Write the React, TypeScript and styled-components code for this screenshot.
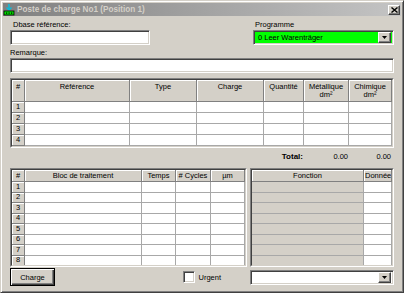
import React from "react";
import styled, { createGlobalStyle, css } from "styled-components";

const GlobalStyle = createGlobalStyle`
  html, body {
    margin: 0;
    padding: 0;
    background: #d4d0c8;
  }
  body {
    font-family: "Liberation Sans", Arial, sans-serif;
    font-size: 7.5px;
    color: #000;
  }
  * {
    box-sizing: border-box;
  }
`;

const sunken = css`
  border: 1px solid;
  border-color: #808080 #fff #fff #808080;
  box-shadow: inset 1px 1px #404040, inset -1px -1px #d4d0c8;
`;

const raised = css`
  border: 1px solid;
  border-color: #fff #404040 #404040 #fff;
  box-shadow: inset -1px -1px #808080;
`;

const Window = styled.div`
  width: 404px;
  height: 293px;
  background: #d4d0c8;
  border: 1px solid;
  border-color: #d4d0c8 #404040 #404040 #d4d0c8;
  box-shadow: inset 1px 1px #fff, inset -1px -1px #808080;
  padding: 2px;
  display: flex;
  flex-direction: column;
  overflow: hidden;
`;

const TitleBar = styled.div`
  height: 13px;
  flex: none;
  display: flex;
  align-items: center;
  background: linear-gradient(to right, #808080, #c4c4c4);
`;

const TitleText = styled.span`
  flex: 1;
  margin-left: 2px;
  color: #d4d0c8;
  font-weight: bold;
  font-size: 8.2px;
  white-space: nowrap;
`;

const CloseButton = styled.div`
  ${raised};
  width: 12px;
  height: 10px;
  margin-right: 1px;
  background: #d4d0c8;
  display: flex;
  align-items: center;
  justify-content: center;
`;

const Body = styled.div`
  flex: 1;
  display: flex;
  flex-direction: column;
  padding: 0 7px;
`;

const TopRow = styled.div`
  display: flex;
  justify-content: space-between;
  margin-top: 3px;
`;

const Field = styled.div<{ $width: number }>`
  width: ${(p) => p.$width}px;
  display: flex;
  flex-direction: column;
`;

const Label = styled.div<{ $indent?: number; $gap?: number }>`
  height: 11px;
  line-height: 11px;
  padding-left: ${(p) => p.$indent ?? 0}px;
  margin-top: ${(p) => p.$gap ?? 0}px;
  white-space: nowrap;
`;

const TextInput = styled.div`
  ${sunken};
  height: 15px;
  background: #fff;
`;

const Combo = styled.div<{ $bg: string }>`
  ${sunken};
  height: 15px;
  background: ${(p) => p.$bg};
  display: flex;
  align-items: center;
  padding: 2px 2px 2px 4px;
`;

const ComboText = styled.span`
  flex: 1;
  white-space: nowrap;
`;

const DropButton = styled.div`
  ${raised};
  width: 13px;
  height: 11px;
  background: #d4d0c8;
  display: flex;
  align-items: center;
  justify-content: center;
`;

const TableFrame = styled.div<{ $height: number }>`
  height: ${(p) => p.$height}px;
  border: 1px solid;
  border-color: #808080 #fff #fff #808080;
  overflow: hidden;
`;

const TableGrid = styled.div<{ $cols: string; $rows: string }>`
  height: 100%;
  border: 1px solid;
  border-color: #404040 #d4d0c8 #d4d0c8 #404040;
  display: grid;
  grid-template-columns: ${(p) => p.$cols};
  grid-template-rows: ${(p) => p.$rows};
  background: #fff;
  overflow: hidden;
`;

const HeadCell = styled.div<{ $top?: boolean; $left?: boolean }>`
  background: #d4d0c8;
  border-right: 1px solid #808080;
  border-bottom: 1px solid #808080;
  box-shadow: inset 1px 1px #fff;
  display: flex;
  flex-direction: column;
  align-items: ${(p) => (p.$left ? "flex-start" : "center")};
  justify-content: ${(p) => (p.$top ? "flex-start" : "center")};
  padding: ${(p) => (p.$top ? "3px 0 0" : "0")} ${(p) => (p.$left ? "0 0 1px" : "0")};
  padding-left: ${(p) => (p.$left ? "1px" : "0")};
  line-height: 8px;
  text-align: center;
  white-space: nowrap;
  overflow: hidden;
`;

const DataCell = styled.div<{ $gray?: boolean }>`
  background: ${(p) => (p.$gray ? "#d4d0c8" : "#fff")};
  border-right: 1px solid #a8a8a8;
  border-bottom: 1px solid #a8a8a8;
`;

const TotalRow = styled.div`
  height: 20px;
  display: grid;
  grid-template-columns: 13px 105px 67px 67px 40px 45px 43px;
  padding: 3px 2px 0;
  line-height: 11px;
`;

const TotalCell = styled.div<{ $bold?: boolean }>`
  text-align: right;
  padding-right: 1px;
  font-weight: ${(p) => (p.$bold ? "bold" : "normal")};
  font-size: ${(p) => (p.$bold ? "8px" : "7.5px")};
`;

const BottomGrid = styled.div`
  display: grid;
  grid-template-columns: 237px 144px;
  column-gap: 3px;
`;

const Footer = styled.div`
  display: grid;
  grid-template-columns: 237px 144px;
  column-gap: 3px;
  align-items: center;
  margin-top: 1px;
`;

const FooterLeft = styled.div`
  display: flex;
  align-items: center;
`;

const PushButton = styled.div`
  width: 45px;
  height: 18px;
  border: 1px solid #000;
  background: #d4d0c8;
  box-shadow: inset 1px 1px #fff, inset -1px -1px #404040, inset -2px -2px #808080;
  display: flex;
  align-items: center;
  justify-content: center;
`;

const CheckWrap = styled.div`
  margin-left: auto;
  margin-right: 26px;
  display: flex;
  align-items: center;
  gap: 3px;
`;

const CheckBox = styled.div`
  ${sunken};
  width: 12px;
  height: 12px;
  background: #fff;
`;

const AppIcon = () => (
  <svg width="12" height="12" viewBox="0 0 12 12">
    <path d="M6 0v5" stroke="#00c0e0" strokeWidth="1.4" />
    <path d="M3.5 3.5L6 6l2.5-2.5" stroke="#00c0e0" strokeWidth="1.2" fill="none" />
    <rect x="1" y="7" width="10" height="4" fill="#00e000" stroke="#000" strokeWidth="0.8" />
    <rect x="3" y="8.5" width="1.2" height="1.2" fill="#000" />
    <rect x="5.5" y="8.5" width="1.2" height="1.2" fill="#000" />
    <rect x="8" y="8.5" width="1.2" height="1.2" fill="#000" />
  </svg>
);

const CloseGlyph = () => (
  <svg width="7" height="6" viewBox="0 0 7 6">
    <path d="M0.5 0.5L6.5 5.5M6.5 0.5L0.5 5.5" stroke="#000" strokeWidth="1.4" />
  </svg>
);

const ArrowGlyph = () => (
  <svg width="5" height="3" viewBox="0 0 5 3">
    <path d="M0 0h5L2.5 3z" fill="#000" />
  </svg>
);

const topCols = "13px 105px 67px 67px 40px 45px 43px";
const topHeads: React.ReactNode[] = [
  "#",
  "Référence",
  "Type",
  "Charge",
  "Quantité",
  <>Métallique<br />dm²</>,
  <>Chimique<br />dm²</>,
];

const leftCols = "13px 117px 34px 35px 34px";
const leftHeads = ["#", "Bloc de traitement", "Temps", "# Cycles", "µm"];

const rows = (n: number) => Array.from({ length: n }, (_, i) => i + 1);

export default function App() {
  return (
    <>
      <GlobalStyle />
      <Window>
        <TitleBar>
          <AppIcon />
          <TitleText>Poste de charge No1 (Position 1)</TitleText>
          <CloseButton>
            <CloseGlyph />
          </CloseButton>
        </TitleBar>
        <Body>
          <TopRow>
            <Field $width={140}>
              <Label $indent={3}>Dbase référence:</Label>
              <TextInput />
            </Field>
            <Field $width={141}>
              <Label $indent={2}>Programme</Label>
              <Combo $bg="#00ff00">
                <ComboText>0 Leer Warenträger</ComboText>
                <DropButton>
                  <ArrowGlyph />
                </DropButton>
              </Combo>
            </Field>
          </TopRow>
          <Label $gap={2}>Remarque:</Label>
          <TextInput />

          <div style={{ marginTop: 5 }} />
          <TableFrame $height={70}>
            <TableGrid $cols={topCols} $rows="22px repeat(4, 11px)">
              {topHeads.map((h, i) => (
                <HeadCell key={i} $top>
                  <span>{h}</span>
                </HeadCell>
              ))}
              {rows(4).map((r) => (
                <React.Fragment key={r}>
                  <HeadCell>{r}</HeadCell>
                  {rows(6).map((c) => (
                    <DataCell key={c} />
                  ))}
                </React.Fragment>
              ))}
            </TableGrid>
          </TableFrame>

          <TotalRow>
            <span />
            <span />
            <span />
            <span />
            <TotalCell $bold>Total:</TotalCell>
            <TotalCell>0.00</TotalCell>
            <TotalCell>0.00</TotalCell>
          </TotalRow>

          <BottomGrid>
            <TableFrame $height={99}>
              <TableGrid $cols={leftCols} $rows="12px repeat(8, 10.5px)">
                {leftHeads.map((h) => (
                  <HeadCell key={h}>{h}</HeadCell>
                ))}
                {rows(8).map((r) => (
                  <React.Fragment key={r}>
                    <HeadCell>{r}</HeadCell>
                    {rows(4).map((c) => (
                      <DataCell key={c} />
                    ))}
                  </React.Fragment>
                ))}
              </TableGrid>
            </TableFrame>
            <TableFrame $height={99}>
              <TableGrid $cols="112px 1fr" $rows="12px repeat(8, 10.5px)">
                <HeadCell>Fonction</HeadCell>
                <HeadCell $left>Données</HeadCell>
                {rows(8).map((r) => (
                  <React.Fragment key={r}>
                    <DataCell $gray />
                    <DataCell />
                  </React.Fragment>
                ))}
              </TableGrid>
            </TableFrame>
          </BottomGrid>

          <Footer>
            <FooterLeft>
              <PushButton>Charge</PushButton>
              <CheckWrap>
                <CheckBox />
                <span>Urgent</span>
              </CheckWrap>
            </FooterLeft>
            <Combo $bg="#fff">
              <ComboText />
              <DropButton>
                <ArrowGlyph />
              </DropButton>
            </Combo>
          </Footer>
        </Body>
      </Window>
    </>
  );
}
